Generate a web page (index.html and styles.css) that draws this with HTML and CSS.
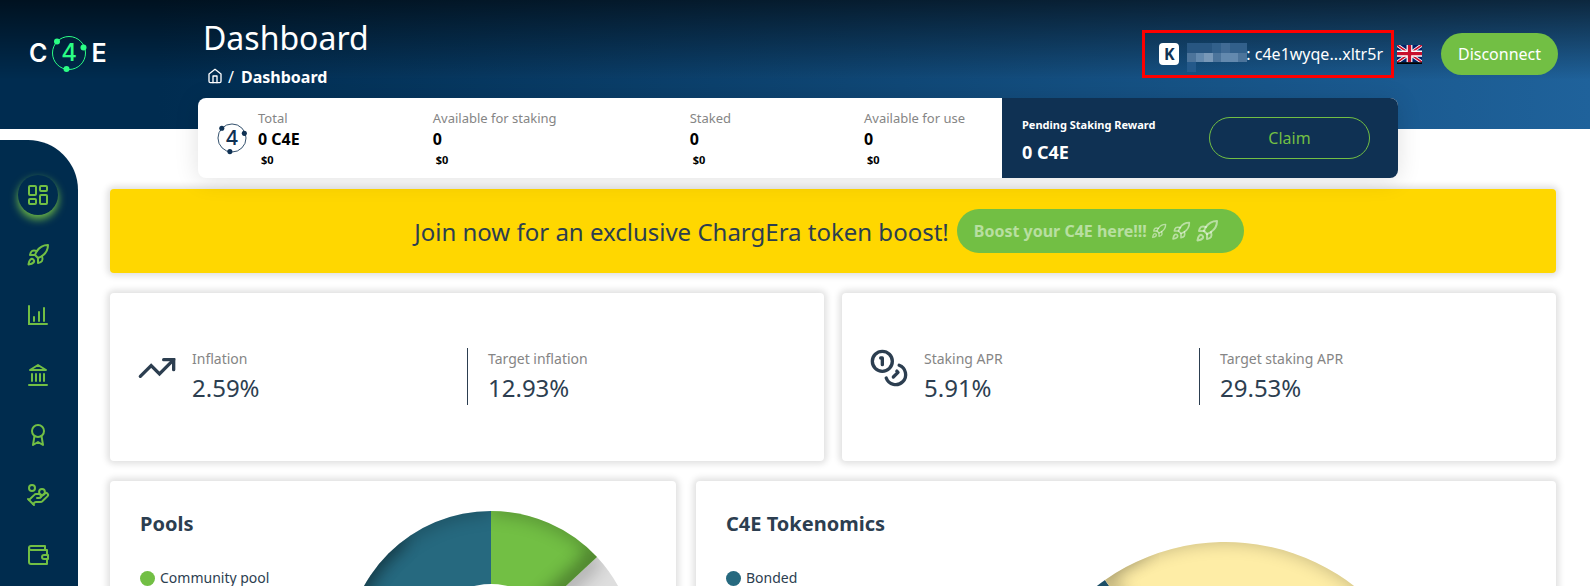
FILE: index.html
```html
<!DOCTYPE html>
<html lang="en">
<head>
    <meta charset="UTF-8">
    <meta name="viewport" content="width=device-width, initial-scale=1.0">
    <title>Dashboard</title>
    <link rel="stylesheet" href="styles.css">
</head>
<body>

<!-- Shared icons -->
<svg class="sprite" aria-hidden="true">
    <symbol id="rocket" viewBox="0 0 24 24">
        <path d="M4.5 16.5c-1.5 1.26-2 5-2 5s3.74-.5 5-2c.71-.84.7-2.13-.09-2.91a2.18 2.18 0 0 0-2.91-.09z"/>
        <path d="m12 15-3-3a22 22 0 0 1 2-3.95A12.88 12.88 0 0 1 22 2c0 2.72-.78 7.5-6 11a22.35 22.35 0 0 1-4 2z"/>
        <path d="M9 12H4s.55-3.03 2-4c1.62-1.08 5 0 5 0"/>
        <path d="M12 15v5s3.03-.55 4-2c1.08-1.62 0-5 0-5"/>
    </symbol>
</svg>

<div class="app">
    <header class="header">
        <a class="logo" href="#" aria-label="C4E">
            <span>C</span>
            <svg class="mark" width="40" height="40" viewBox="0 0 40 40">
                <circle class="ring" cx="20" cy="20" r="16.5"/>
                <circle cx="8" cy="8.5" r="3"/>
                <circle cx="34.5" cy="14.5" r="3"/>
                <circle cx="17.5" cy="36" r="3"/>
                <text x="20" y="28">4</text>
            </svg>
            <span>E</span>
        </a>
        <div class="heading">
            <h1>Dashboard</h1>
            <nav class="breadcrumb">
                <a href="#" aria-label="Home"><svg class="icon" width="16" height="16" viewBox="0 0 24 24"><path d="m3 9 9-7 9 7v11a2 2 0 0 1-2 2H5a2 2 0 0 1-2-2z"/><path d="M9 22V12h6v10"/></svg></a>
                <span>/</span>
                <b>Dashboard</b>
            </nav>
        </div>
        <div class="account">
            <div class="wallet">
                <span class="badge">K</span>
                <svg class="pixels" width="60" height="29" viewBox="0 0 60 29">
                    <path fill="#285681" d="M0 0h60v10H0z"/>
                    <path fill="#32608b" d="M25 0h9v10h-9zM43 0h17v10H43z"/>
                    <path fill="#416b95" d="M34 0h9v10h-9z"/>
                    <path fill="#4c749b" d="M0 10h60v9H0z"/>
                    <path fill="#6389ae" d="M9 10h17v9H9zM34 10h17v9H34z"/>
                    <path fill="#7898b8" d="M17 10h9v9h-9z"/>
                    <path fill="#24598a" d="M0 19h9v10H0z"/>
                </svg>
                <span>: c4e1wyqe...xltr5r</span>
            </div>
            <button class="flag" aria-label="English">
                <svg width="25" height="19" viewBox="0 0 60 44" preserveAspectRatio="none">
                    <path fill="#012169" d="M0 0h60v40H0z"/>
                    <path stroke="#fff" stroke-width="8" d="m0 0 60 40M60 0 0 40"/>
                    <path stroke="#c8102e" stroke-width="4" d="m0 0 60 40M60 0 0 40"/>
                    <path stroke="#fff" stroke-width="14" d="M30 0v40M0 20h60"/>
                    <path stroke="#c8102e" stroke-width="8" d="M30 0v40M0 20h60"/>
                    <path fill="#000" d="M0 40h60v4H0z"/>
                </svg>
            </button>
            <button class="btn disconnect">Disconnect</button>
        </div>
    </header>

    <div class="layout">
        <nav class="sidebar">
            <a class="active" href="#" aria-label="Dashboard"><svg class="icon" width="24" height="24" viewBox="0 0 24 24"><rect x="3" y="3" width="7" height="9" rx="1"/><rect x="14" y="3" width="7" height="5" rx="1"/><rect x="14" y="12" width="7" height="9" rx="1"/><rect x="3" y="16" width="7" height="5" rx="1"/></svg></a>
            <a href="#" aria-label="Boost"><svg class="icon" width="24" height="24"><use href="#rocket"/></svg></a>
            <a href="#" aria-label="Statistics"><svg class="icon square" width="24" height="24" viewBox="0 0 24 24"><path d="M3 3v18h18M8 18v-4M13 18V9M18 18V5"/></svg></a>
            <a href="#" aria-label="Governance"><svg class="icon" width="24" height="24" viewBox="0 0 24 24"><path d="M3 22h18M6 18v-7M10 18v-7M14 18v-7M18 18v-7M12 2l8 5H4z"/></svg></a>
            <a href="#" aria-label="Validators"><svg class="icon" width="24" height="24" viewBox="0 0 24 24"><circle cx="12" cy="8" r="6"/><path d="M15.5 12.9 17 22l-5-3-5 3 1.500-9.100"/></svg></a>
            <a href="#" aria-label="Staking"><svg class="icon" width="24" height="24" viewBox="0 0 24 24"><path d="M11 15h2a2 2 0 1 0 0-4h-3c-.6 0-1.100.2-1.400.6L3 17"/><path d="m7 21 1.600-1.400c.3-.4.8-.6 1.400-.6h4c1.100 0 2.100-.4 2.800-1.200l4.600-4.400a2 2 0 0 0-2.750-2.910l-4.200 3.900"/><path d="m2 16 6 6"/><circle cx="16" cy="9" r="2.900"/><circle cx="6" cy="5" r="3"/></svg></a>
            <a href="#" aria-label="Wallet"><svg class="icon" width="24" height="24" viewBox="0 0 24 24"><path d="M21 12V7H5a2 2 0 0 1 0-4h14v4"/><path d="M3 5v14a2 2 0 0 0 2 2h16v-5"/><path d="M18 12a2 2 0 0 0 0 4h4v-4Z"/></svg></a>
        </nav>

        <main class="main">
            <section class="balance">
                <div class="amounts">
                    <div class="amount total">
                        <svg class="mark" width="34" height="34" viewBox="0 0 40 40">
                            <circle class="ring" cx="20" cy="20" r="16.5"/>
                            <circle cx="8" cy="8.5" r="3"/>
                            <circle cx="34.5" cy="14.5" r="3"/>
                            <circle cx="17.5" cy="36" r="3"/>
                            <text x="20" y="28">4</text>
                        </svg>
                        <dl><dt>Total</dt><dd>0 C4E</dd><dd class="usd">$0</dd></dl>
                    </div>
                    <dl class="amount"><dt>Available for staking</dt><dd>0</dd><dd class="usd">$0</dd></dl>
                    <dl class="amount"><dt>Staked</dt><dd>0</dd><dd class="usd">$0</dd></dl>
                    <dl class="amount"><dt>Available for use</dt><dd>0</dd><dd class="usd">$0</dd></dl>
                </div>
                <div class="reward">
                    <div>
                        <h2>Pending Staking Reward</h2>
                        <p>0 C4E</p>
                    </div>
                    <button class="btn claim">Claim</button>
                </div>
            </section>

            <section class="card banner">
                <span>Join now for an exclusive ChargEra token boost!</span>
                <button class="btn boost" disabled>
                    Boost your C4E here!!!
                    <svg class="icon" width="16" height="16"><use href="#rocket"/></svg>
                    <svg class="icon" width="20" height="20"><use href="#rocket"/></svg>
                    <svg class="icon" width="24" height="24"><use href="#rocket"/></svg>
                </button>
            </section>

            <div class="stats">
                <section class="card stat">
                    <div class="stat-item">
                        <svg class="icon square" width="40" height="40" viewBox="0 0 24 24"><path d="M22 7l-8.500 8.500-5-5L2 17"/><path d="M16 7h6v6"/></svg>
                        <dl><dt>Inflation</dt><dd>2.59%</dd></dl>
                    </div>
                    <div class="stat-item target">
                        <dl><dt>Target inflation</dt><dd>12.93%</dd></dl>
                    </div>
                </section>
                <section class="card stat">
                    <div class="stat-item">
                        <svg class="icon" width="40" height="40" viewBox="0 0 24 24"><circle cx="8" cy="8" r="6"/><path d="M18.090 10.370A6 6 0 1 1 10.340 18"/><path d="M7 6h1v4"/><path d="m16.710 13.880.7.710-2.820 2.820"/></svg>
                        <dl><dt>Staking APR</dt><dd>5.91%</dd></dl>
                    </div>
                    <div class="stat-item target">
                        <dl><dt>Target staking APR</dt><dd>29.53%</dd></dl>
                    </div>
                </section>
            </div>

            <div class="charts">
                <section class="card chart-card">
                    <div>
                        <h2>Pools</h2>
                        <ul class="legend"><li class="community">Community pool</li></ul>
                    </div>
                    <svg class="pools-chart" width="290" height="290" viewBox="-145 -145 290 290">
                        <defs>
                            <filter id="soft" x="-30%" y="-30%" width="160%" height="160%"><feGaussianBlur stdDeviation="9"/></filter>
                            <clipPath id="teal"><path d="M0 0V-145A145 145 0 0 0 0 145z"/></clipPath>
                            <clipPath id="green"><path d="M0 0V-145A145 145 0 0 1 106 -99z"/></clipPath>
                            <clipPath id="grey"><path d="M0 0 106 -99A145 145 0 0 1 0 145z"/></clipPath>
                        </defs>
                        <g clip-path="url(#grey)">
                            <path fill="#dedede" d="M-145 -145h290v290h-290z"/>
                            <path class="shade light" d="M0 0 106 -99"/>
                        </g>
                        <g clip-path="url(#green)">
                            <path fill="#72bf44" d="M-145 -145h290v290h-290z"/>
                            <path class="shade" d="M0 0 110 -103"/>
                            <path class="shade light" d="M0 -150A150 150 0 0 1 110 -103"/>
                        </g>
                        <g clip-path="url(#teal)">
                            <path fill="#26697f" d="M-145 -145h290v290h-290z"/>
                            <path class="shade light" d="M0 -150A150 150 0 0 0 0 150"/>
                            <path class="shade" d="M-90 -120A150 150 0 0 0 0 150"/>
                        </g>
                        <circle r="72" fill="#fff"/>
                    </svg>
                </section>
                <section class="card chart-card">
                    <div>
                        <h2>C4E Tokenomics</h2>
                        <ul class="legend"><li class="bonded">Bonded</li></ul>
                    </div>
                    <svg class="tokenomics-chart" width="420" height="420" viewBox="-210 -210 420 420">
                        <clipPath id="yellow"><path d="M0 0-120 -172A210 210 0 1 1 0 210z"/></clipPath>
                        <path fill="#1c4e66" d="M0 0-120 -172A210 210 0 0 0 0 210z"/>
                        <g clip-path="url(#yellow)">
                            <path fill="#feeda6" d="M-210 -210h420v420h-420z"/>
                            <path class="shade light" d="M-125 -179A217 217 0 0 1 217 0"/>
                            <path class="shade light" d="M-90 -129-125 -179-80 -206"/>
                        </g>
                    </svg>
                </section>
            </div>
        </main>
    </div>
</div>

</body>
</html>
```
FILE: styles.css
```css
* {
    box-sizing: border-box;
}
body {
    margin: 0;
    font-family: "Noto Sans", sans-serif;
    font-size: 16px;
    color: #2c3e50;
    background: #fff;
}
h1, h2, p, dl, dd, ul {
    margin: 0;
    padding: 0;
}
a {
    color: inherit;
    text-decoration: none;
}
svg {
    display: block;
    flex-shrink: 0;
}
.sprite {
    position: absolute;
    width: 0;
    height: 0;
}
.icon {
    fill: none;
    stroke: currentColor;
    stroke-width: 2;
    stroke-linecap: round;
    stroke-linejoin: round;
}
.square {
    stroke-linejoin: miter;
}
.mark {
    fill: currentColor;
    font-family: Inter, sans-serif;
    font-size: 24px;
    font-weight: 500;
    text-anchor: middle;
}
.ring {
    fill: none;
    stroke: currentColor;
}
.app {
    height: 100vh;
    overflow: hidden;
    display: flex;
    flex-direction: column;
}

/* Header */
.header {
    display: flex;
    align-items: flex-start;
    height: 129px;
    flex-shrink: 0;
    padding: 18px 32px 0 29px;
    color: #fff;
    background: linear-gradient(rgba(0, 0, 0, 0.6), rgba(0, 0, 0, 0) 80px), linear-gradient(90deg, #002c50 10%, #1f629b);
}
.logo {
    display: flex;
    align-items: center;
    gap: 2px;
    width: 174px;
    margin-top: 15px;
    font-family: Inter, sans-serif;
    font-size: 25px;
    font-weight: 600;
}
.logo svg {
    color: #2bfe85;
}
.heading {
    flex: 1;
}
.heading h1 {
    font-size: 32px;
    font-weight: 400;
    line-height: 40px;
}
.breadcrumb {
    display: flex;
    align-items: center;
    gap: 5px;
    padding-left: 4px;
    margin-top: 7px;
    line-height: 24px;
}
.breadcrumb a {
    margin-bottom: 3px;
}
.breadcrumb b {
    margin-left: 2px;
}
.account {
    display: flex;
    align-items: center;
    margin-top: 12px;
}
.wallet {
    display: flex;
    align-items: center;
    height: 48px;
    padding: 0 8px 0 14px;
    border: 3px solid #f00;
}
.badge {
    width: 20px;
    height: 22px;
    border-radius: 4px;
    background: #fff;
    color: #0f3153;
    font-weight: 700;
    line-height: 22px;
    text-align: center;
}
.pixels {
    margin: 6px -1px 0 8px;
}
button {
    font: inherit;
    cursor: pointer;
}
.flag {
    padding: 0;
    margin: 0 19px 0 3px;
    border: 0;
    background: none;
}
.btn {
    height: 42px;
    border: 0;
    border-radius: 22px;
    background: #72bf44;
    color: #fff;
}
.disconnect {
    width: 117px;
    padding: 0;
}

/* Sidebar */
.layout {
    display: flex;
    flex: 1;
    min-height: 0;
}
.sidebar {
    display: flex;
    flex-direction: column;
    gap: 20px;
    width: 78px;
    flex-shrink: 0;
    margin-top: 11px;
    padding: 35px 18px 0;
    overflow: hidden;
    border-top-right-radius: 50px;
    background: #002c4e;
    color: #72bf44;
}
.sidebar a {
    display: flex;
    align-items: center;
    justify-content: center;
    width: 40px;
    height: 40px;
    flex-shrink: 0;
    border-radius: 50%;
}
.sidebar .active {
    box-shadow: 0 4px 8px #72bf44;
}
.main {
    flex: 1;
    min-width: 0;
    padding: 0 34px 0 32px;
}

/* Balance bar */
.balance {
    position: relative;
    z-index: 1;
    display: flex;
    height: 80px;
    margin: -31px 158px 11px 88px;
    border-radius: 8px;
    overflow: hidden;
    background: #fff;
    box-shadow: 0 2px 24px rgba(0, 0, 0, 0.12);
}
.amounts {
    flex: 1;
    display: flex;
    align-items: center;
    justify-content: space-between;
    padding: 0 37px 0 17px;
    color: #000;
}
.total {
    display: flex;
    align-items: center;
    gap: 9px;
}
.total svg {
    color: #0f3153;
}
.amount dt {
    font-size: 13px;
    line-height: 20px;
    color: #858585;
}
.amount dd {
    font-weight: 700;
    line-height: 22px;
}
.amount .usd {
    padding-left: 3px;
    font-size: 11px;
    line-height: 19px;
}
.reward {
    display: flex;
    align-items: flex-start;
    justify-content: space-between;
    width: 396px;
    padding: 18px 28px 18px 20px;
    background: #0f3153;
    color: #fff;
}
.reward h2 {
    font-size: 11px;
    line-height: 18px;
}
.reward p {
    margin-top: 6px;
    font-size: 18px;
    font-weight: 700;
    line-height: 24px;
}
.claim {
    align-self: center;
    width: 161px;
    border: 1px solid #72bf44;
    background: none;
    color: #72bf44;
}

/* Cards */
.card {
    border-radius: 4px;
    background: #fff;
    box-shadow: 0 0 6px 3px rgba(0, 0, 0, 0.12);
}
.banner {
    display: flex;
    align-items: center;
    justify-content: center;
    gap: 8px;
    height: 84px;
    padding-right: 8px;
    background: #ffd700;
    font-size: 24px;
}
.boost {
    display: flex;
    align-items: center;
    gap: 4px;
    height: 44px;
    padding: 0 25px 0 17px;
    color: rgba(255, 255, 255, 0.5);
    font-size: 16px;
    font-weight: 700;
}
.stats {
    display: grid;
    grid-template-columns: 1fr 1fr;
    gap: 18px;
    margin: 20px 0;
}
.stat {
    display: grid;
    grid-template-columns: 1fr 1fr;
    padding: 55px 0 56px;
}
.stat-item {
    display: flex;
    align-items: flex-start;
    gap: 15px;
    padding-left: 27px;
}
.target {
    padding-left: 20px;
    border-left: 1px solid #2c3e50;
}
.stat dt {
    font-size: 14px;
    line-height: 22px;
    color: #858585;
}
.stat dd {
    font-size: 24px;
    line-height: 35px;
}
.charts {
    display: grid;
    grid-template-columns: 566fr 860fr;
    gap: 20px;
}
.chart-card {
    display: flex;
    justify-content: space-between;
    padding: 29px 40px 30px 30px;
}
.chart-card h2 {
    font-size: 20px;
    line-height: 28px;
}
.legend {
    margin-top: 30px;
    list-style: none;
    font-size: 14px;
    line-height: 20px;
}
.legend li {
    display: flex;
    align-items: center;
    gap: 5px;
}
.legend li::before {
    content: "";
    width: 15px;
    height: 15px;
    border-radius: 50%;
    background: #72bf44;
}
.legend .bonded::before {
    background: #26697f;
}
.pools-chart {
    margin-top: 1px;
}
.tokenomics-chart {
    margin: 32px 81px 0 0;
}
.shade {
    fill: none;
    stroke: #000;
    stroke-width: 16px;
    opacity: 0.4;
    filter: url(#soft);
}
.light {
    opacity: 0.25;
}
```
